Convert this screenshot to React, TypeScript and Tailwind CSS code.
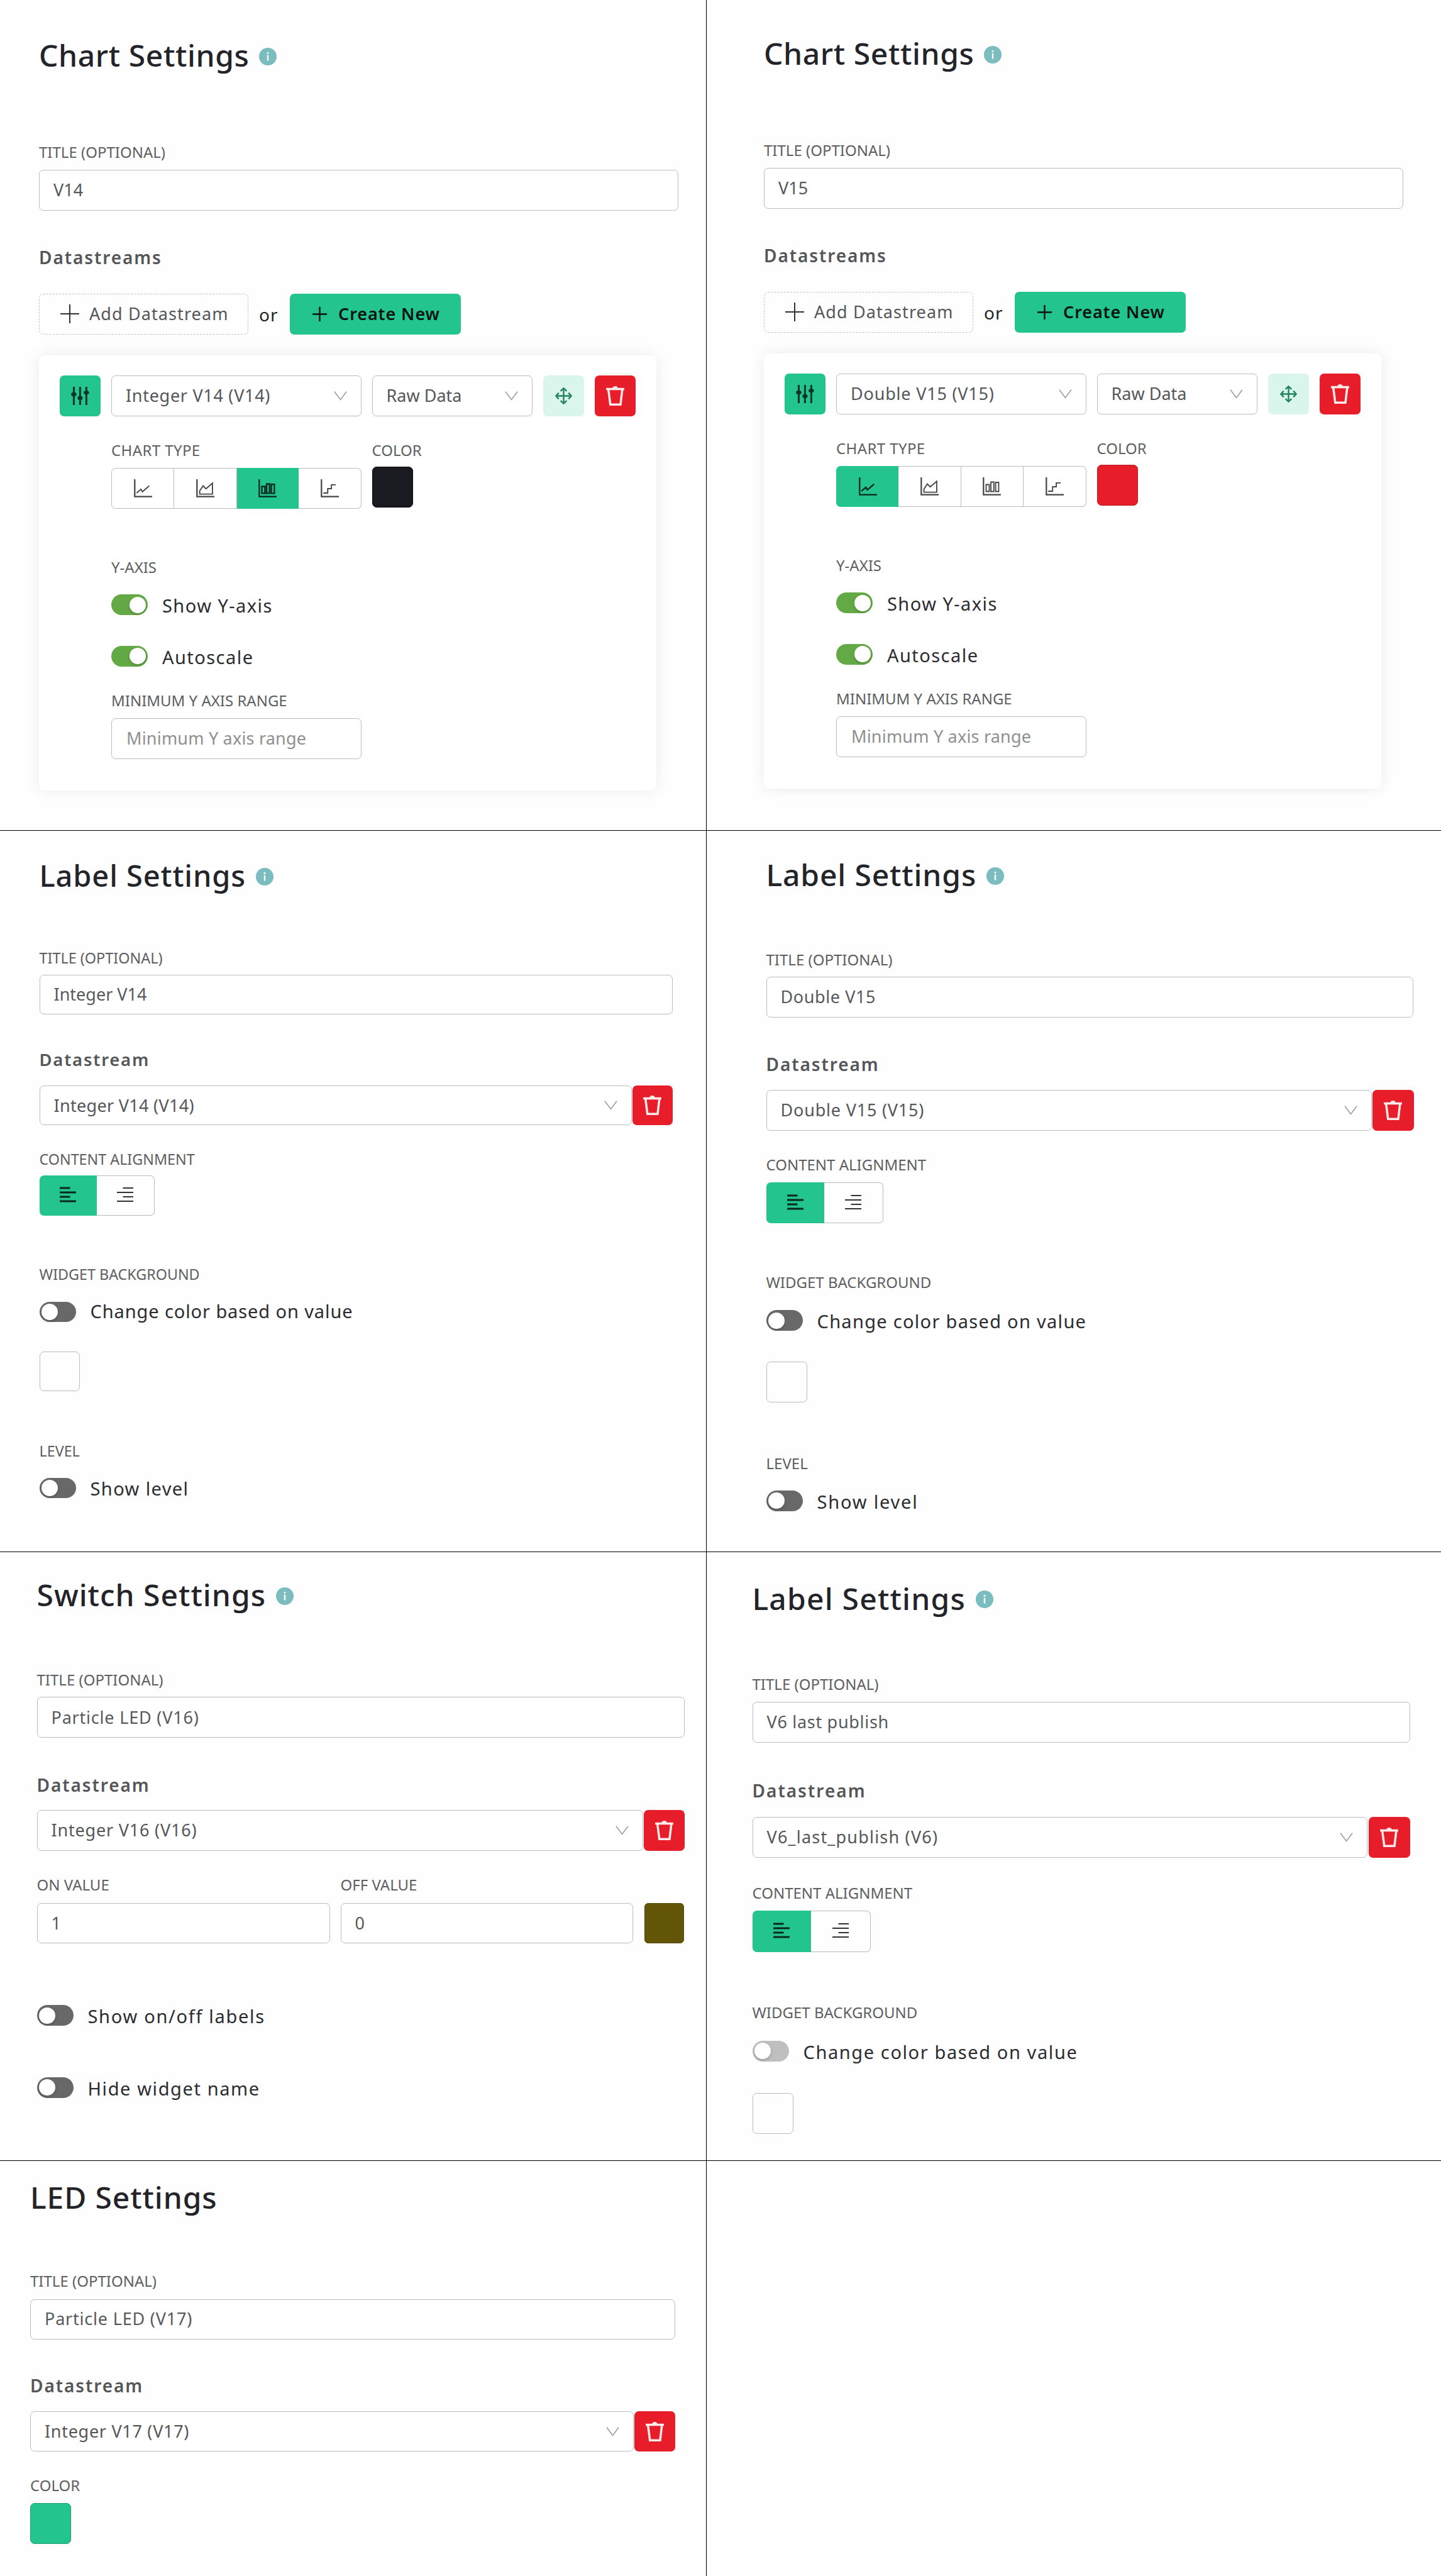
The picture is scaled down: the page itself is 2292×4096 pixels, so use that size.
import type { ReactNode } from "react";

const SANS = "font-['Noto_Sans',sans-serif]";

/* ---------- icons ---------- */

function InfoIcon() {
  return (
    <svg viewBox="0 0 28 28" className="mt-[3px] size-[28px] shrink-0">
      <circle cx="14" cy="14" r="14" fill="#7bbcbe" />
      <circle cx="14" cy="8.2" r="1.5" fill="#fff" />
      <rect x="12.8" y="11.4" width="2.4" height="9.2" rx="0.6" fill="#fff" />
    </svg>
  );
}

function Chevron() {
  return (
    <svg viewBox="0 0 21 15" className="h-[15px] w-[21px] shrink-0" fill="none" stroke="#9c9c9c" strokeWidth="1.6">
      <path d="M1 0.8 L10.5 13.4 L20 0.8" />
    </svg>
  );
}

function TrashIcon() {
  return (
    <svg viewBox="0 0 31 33.3" className="h-[31px] w-[29px] shrink-0" fill="none">
      <path d="M11 3.2 Q11.6 0 15.5 0 Q19.4 0 20 3.2 Z" fill="#fde8ea" />
      <path d="M0 3 H31 V6.8 H0 Z" fill="#fde8ea" />
      <path d="M3.9 6 L7.2 31.4 H24.6 L27.6 6" stroke="#fde8ea" strokeWidth="3.8" />
    </svg>
  );
}

function SlidersIcon() {
  return (
    <svg viewBox="0 0 31 31.4" className="h-[29px] w-[29px]" stroke="#0c3527" strokeWidth="3.2">
      <path d="M4.6 0 V31.4 M15.4 0 V31.4 M26.2 0 V31.4" />
      <g fill="#0c3527" stroke="none">
        <ellipse cx="4.6" cy="13" rx="4.6" ry="3.6" />
        <ellipse cx="15.4" cy="19.4" rx="4.4" ry="3.4" />
        <ellipse cx="26.2" cy="10" rx="4.6" ry="3.2" />
      </g>
    </svg>
  );
}

function MoveIcon() {
  return (
    <svg viewBox="0 0 28 28" className="size-[27px]" fill="none" stroke="#22835f" strokeWidth="2.5">
      <path d="M14 1 V27 M1 14 H27" />
      <path d="M9 6 L14 1.4 L19 6 M9 22 L14 26.6 L19 22 M6 9 L1.4 14 L6 19 M22 9 L26.6 14 L22 19" />
    </svg>
  );
}

function Plus({ className }: { className: string }) {
  return (
    <svg viewBox="0 0 30 30" className={className} fill="none" stroke="currentColor">
      <path d="M15 0 V30 M0 15 H30" />
    </svg>
  );
}

const CHARTS = [
  "M4.5 23.5 L12 17 L14.4 21.4 L26 11.3",
  "M6 25.3 V19.7 L11.7 11.3 L16.7 16.3 L27.7 6.7 V25.3 Z",
  "M5.9 12.3 H11.2 V24 H5.9 Z M14 8 H19 V24 H14 Z M22 8.6 H27.2 V24 H22 Z",
  "M4.5 23.5 H12 V16 H18.3 V9.5 H25.7",
];

function ChartIcon({ kind, on }: { kind: number; on: boolean }) {
  return (
    <svg viewBox="0 0 31 31" className="size-[29px]" fill="none" stroke={on ? "#06291d" : "#454545"}>
      <path d="M1.4 0 V29.6 H31" strokeWidth="2.4" />
      <path d={CHARTS[kind]} strokeWidth={on ? 2.5 : 2} />
    </svg>
  );
}

function AlignIcon({ right = false, on = false }: { right?: boolean; on?: boolean }) {
  return (
    <svg viewBox="0 0 26 25" className="mb-[2px] h-[25px] w-[26px]" stroke={on ? "#06291d" : "#333333"} strokeWidth={on ? 2.9 : 2.1}>
      <path d={right ? "M9.5 2 H26 M0 9 H26 M9.5 16 H26 M0 23 H26" : "M0 2 H16.5 M0 9 H26 M0 16 H16.5 M0 23 H26"} />
    </svg>
  );
}

/* ---------- form pieces ---------- */

function Title({ children, info = true, className = "", text = "text-[48px] tracking-[0.6px]" }: {
  children: string;
  info?: boolean;
  className?: string;
  text?: string;
}) {
  return (
    <div className={`flex h-[60px] items-center gap-[16px] ${className}`}>
      <h1 className={`leading-[60px] font-medium whitespace-nowrap text-[#232429] ${text}`}>{children}</h1>
      {info && <InfoIcon />}
    </div>
  );
}

function Label({ children, className = "", text = "text-[24px]" }: { children: string; className?: string; text?: string }) {
  return <div className={`h-[32px] leading-[32px] whitespace-nowrap text-[#5e5f62] ${text} ${className}`}>{children}</div>;
}

function Heading({ children, className = "", text = "text-[28px] tracking-[1.9px]" }: { children: string; className?: string; text?: string }) {
  return <h2 className={`h-[32px] leading-[32px] font-[560] whitespace-nowrap text-[#555659] ${text} ${className}`}>{children}</h2>;
}

function Field({ children, className = "" }: { children: string; className?: string }) {
  return (
    <div className={`flex items-center rounded-[7px] border border-[#bcbcbc] bg-white px-[22px] text-[27px] font-[385] whitespace-nowrap text-[#58595c] ${className}`}>
      {children}
    </div>
  );
}

function Select({ children, className = "" }: { children: string; className?: string }) {
  return (
    <div className={`flex items-center justify-between rounded-[7px] border border-[#bcbcbc] bg-white px-[22px] text-[27px] font-[385] whitespace-nowrap text-[#55565a] ${className}`}>
      <span>{children}</span>
      <Chevron />
    </div>
  );
}

function TrashButton({ className = "" }: { className?: string }) {
  return (
    <button className={`flex items-center justify-center rounded-[7px] bg-[#e71d29] ${className}`}>
      <TrashIcon />
    </button>
  );
}

function Toggle({ children, on = false, muted = false, className = "h-[33px]", text = "tracking-[1.45px] pt-[2px]" }: {
  children: string;
  on?: boolean;
  muted?: boolean;
  className?: string;
  text?: string;
}) {
  return (
    <div className={`flex items-center gap-[23px] ${className}`}>
      <span
        className={`flex h-full w-[58px] shrink-0 items-center rounded-full px-[3px] ${
          on ? "justify-end bg-[#63a945]" : muted ? "bg-[#bfbfbf]" : "bg-[#686868]"
        }`}
      >
        <span className="size-[26px] rounded-full bg-white shadow-[0_2px_4px_rgba(0,0,0,0.2)]" />
      </span>
      <span className={`text-[29px] leading-[33px] font-[395] whitespace-nowrap text-[#2b2c30] ${text}`}>{children}</span>
    </div>
  );
}

function AlignGroup({ className = "" }: { className?: string }) {
  return (
    <div className={`flex ${className}`}>
      <span className="flex flex-1 items-center justify-center rounded-l-[7px] bg-[#23c48e]">
        <AlignIcon on />
      </span>
      <span className="flex flex-1 items-center justify-center rounded-r-[7px] border border-l-0 border-[#bcbcbc]">
        <AlignIcon right />
      </span>
    </div>
  );
}

function Cell({ children, className = "" }: { children?: ReactNode; className?: string }) {
  return <section className={`flex flex-col items-start ${className}`}>{children}</section>;
}

function ChartSettings({ title, stream, active, swatch, tracking }: {
  title: string;
  stream: string;
  active: number;
  swatch: string;
  tracking: string;
}) {
  return (
    <>
      <Label className="mt-[107.5px]">TITLE (OPTIONAL)</Label>
      <Field className="mt-[12.5px] h-[65px] w-[1017px]">{title}</Field>
      <Heading className="mt-[58px]">Datastreams</Heading>
      <div className="mt-[41.5px] flex h-[65px] items-center">
        <button className="flex h-full w-[333px] items-center rounded-[7px] border border-dashed border-[#c4c4c4] pl-[33px] text-[27px] font-[395] tracking-[1.1px] whitespace-nowrap text-[#55565a]">
          <Plus className="mr-[16px] size-[30px] stroke-2 text-[#333]" />
          Add Datastream
        </button>
        <span className="w-[66px] pt-[2px] pl-[17px] text-[28px] font-[395] tracking-[1px] text-[#222326]">or</span>
        <button className="flex h-full w-[272px] items-center rounded-[7px] bg-[#23c48e] pl-[36px] text-[27px] font-semibold tracking-[0.9px] whitespace-nowrap text-[#08140f]">
          <Plus className="mr-[18px] size-[23px] stroke-[3.2]" />
          Create New
        </button>
      </div>
      <div className="mt-[33px] flex h-[692px] w-[982px] flex-col items-start rounded-[9px] bg-white pt-[32px] pl-[33px] shadow-[0_0_24px_rgba(0,0,0,0.08)]">
        <div className="flex h-[65px] items-stretch">
          <button className="mr-[17px] flex w-[65px] items-center justify-center rounded-[7px] bg-[#23c48e]">
            <SlidersIcon />
          </button>
          <Select className={`mr-[17px] w-[397.5px] ${tracking}`}>{stream}</Select>
          <Select className="mr-[17px] w-[255px]">Raw Data</Select>
          <button className="mr-[17px] flex w-[65px] items-center justify-center rounded-[7px] bg-[#daf5eb]">
            <MoveIcon />
          </button>
          <TrashButton className="w-[65px]" />
        </div>
        <div className="ml-[82px] flex flex-col items-start">
          <div className="mt-[38px] flex gap-[17px]">
            <div>
              <Label className="tracking-[0.4px]">CHART TYPE</Label>
              <div className="mt-[12px] flex h-[65px] w-[397.5px]">
                {CHARTS.map((_, i) => (
                  <span
                    key={i}
                    className={`flex flex-1 items-center justify-center first:rounded-l-[7px] first:border-l last:rounded-r-[7px] ${
                      i === active ? "border-[#23c48e] bg-[#23c48e]" : "border-y border-r border-[#bcbcbc]"
                    }`}
                  >
                    <ChartIcon kind={i} on={i === active} />
                  </span>
                ))}
              </div>
            </div>
            <div>
              <Label>COLOR</Label>
              <div className={`mt-[10px] size-[65px] rounded-[7px] border ${swatch}`} />
            </div>
          </div>
          <Label className="mt-[77px]">Y-AXIS</Label>
          <Toggle on className="mt-[27.5px] h-[33px]">Show Y-axis</Toggle>
          <Toggle on className="mt-[48.5px] h-[33px]">Autoscale</Toggle>
          <Label className="mt-[38px]">MINIMUM Y AXIS RANGE</Label>
          <div className="mt-[12px] flex h-[65px] w-[397.5px] items-center rounded-[7px] border border-[#bcbcbc] pl-[23px] text-[27px] font-[385] tracking-[0.2px] whitespace-nowrap text-[#8f8f8f]">
            Minimum Y axis range
          </div>
        </div>
      </div>
    </>
  );
}

export default function App() {
  return (
    <main className={`grid h-[4096px] w-[2292px] grid-cols-[1124px_1168px] grid-rows-[1321px_1147px_968px_660px] overflow-hidden bg-[#fefefe] ${SANS}`}>
      <Cell className="border-r border-b border-black pl-[62px]">
        <Title className="mt-[58px]">Chart Settings</Title>
        <ChartSettings title="V14" stream="Integer V14 (V14)" active={2} tracking="tracking-[0.7px]" swatch="border-[#0c0d10] bg-[#1a1b20]" />
      </Cell>

      <Cell className="border-b border-black pl-[91px]">
        <Title className="mt-[55px]">Chart Settings</Title>
        <ChartSettings title="V15" stream="Double V15 (V15)" active={0} tracking="tracking-[0.8px]" swatch="border-[#b81c25] bg-[#e71d29]" />
      </Cell>

      <Cell className="border-r border-b border-black pl-[62.5px]">
        <Title className="mt-[41px]" text="text-[47px] tracking-[0.9px]">Label Settings</Title>
        <Label className="mt-[84.8px]" text="text-[23.4px]">TITLE (OPTIONAL)</Label>
        <Field className="mt-[10.8px] h-[63px] w-[1007px]">Integer V14</Field>
        <Heading className="mt-[56.8px]" text="text-[27.4px] tracking-[1.8px]">Datastream</Heading>
        <div className="mt-[25.1px] flex h-[63px]">
          <Select className="w-[942px] tracking-[0.3px]">Integer V14 (V14)</Select>
          <TrashButton className="ml-px w-[64px]" />
        </div>
        <Label className="mt-[37.4px]" text="text-[23.3px]">CONTENT ALIGNMENT</Label>
        <AlignGroup className="mt-[10.2px] h-[63.5px] w-[183px]" />
        <Label className="mt-[77.2px]" text="text-[23.3px]">WIDGET BACKGROUND</Label>
        <Toggle className="mt-[27.9px] h-[32px]" text="tracking-[0.9px] mb-[3px]">Change color based on value</Toggle>
        <div className="mt-[47px] h-[63px] w-[64px] rounded-[7px] border border-[#bcbcbc]" />
        <Label className="mt-[79.5px]" text="text-[23.3px]">LEVEL</Label>
        <Toggle className="mt-[26.9px] h-[32px]" text="tracking-[1.4px]">Show level</Toggle>
      </Cell>

      <Cell className="border-b border-black pl-[94.5px]">
        <Title className="mt-[40.2px]" text="text-[48px] tracking-[0.85px]">Label Settings</Title>
        <Label className="mt-[88.4px]">TITLE (OPTIONAL)</Label>
        <Field className="mt-[11.5px] h-[65px] w-[1029px] tracking-[0.6px]">Double V15</Field>
        <Heading className="mt-[58.2px]">Datastream</Heading>
        <div className="mt-[24.3px] flex h-[65.3px]">
          <Select className="w-[963px] tracking-[0.8px]">Double V15 (V15)</Select>
          <TrashButton className="ml-px w-[66px]" />
        </div>
        <Label className="mt-[38.5px]">CONTENT ALIGNMENT</Label>
        <AlignGroup className="mt-[11.5px] h-[65.3px] w-[186px]" />
        <Label className="mt-[78.1px]">WIDGET BACKGROUND</Label>
        <Toggle className="mt-[27.8px] h-[33px]" text="tracking-[1.3px] pt-[2px]">Change color based on value</Toggle>
        <div className="mt-[49px] size-[65px] rounded-[7px] border border-[#bcbcbc]" />
        <Label className="mt-[80.8px]">LEVEL</Label>
        <Toggle className="mt-[26.7px] h-[33px]" text="tracking-[1.8px] pt-[2px]">Show level</Toggle>
      </Cell>

      <Cell className="border-r border-b border-black pl-[58.5px]">
        <Title className="mt-[38.4px]" text="text-[48px] tracking-[1px]">Switch Settings</Title>
        <Label className="mt-[88.5px]">TITLE (OPTIONAL)</Label>
        <Field className="mt-[11.5px] h-[65px] w-[1030px] tracking-[0.8px]">Particle LED (V16)</Field>
        <Heading className="mt-[58.2px]">Datastream</Heading>
        <div className="mt-[24.4px] flex h-[65px]">
          <Select className="w-[964px] tracking-[0.8px]">Integer V16 (V16)</Select>
          <TrashButton className="ml-px w-[65px]" />
        </div>
        <div className="mt-[38.2px] flex">
          <Label className="w-[483px]">ON VALUE</Label>
          <Label>OFF VALUE</Label>
        </div>
        <div className="mt-[12.8px] flex h-[64px]">
          <Field className="w-[466px]">1</Field>
          <Field className="ml-[17px] w-[465px]">0</Field>
          <div className="ml-[18px] w-[63px] rounded-[6px] border border-[#54490a] bg-[#635507]" />
        </div>
        <Toggle className="mt-[98.1px] h-[33px]" text="tracking-[1.7px] pt-[2px]">Show on/off labels</Toggle>
        <Toggle className="mt-[81.7px] h-[33px]" text="tracking-[1.6px] pt-[2px]">Hide widget name</Toggle>
      </Cell>

      <Cell className="border-b border-black pl-[72.5px]">
        <Title className="mt-[43.5px]" text="text-[48px] tracking-[1.2px]">Label Settings</Title>
        <Label className="mt-[90.4px]">TITLE (OPTIONAL)</Label>
        <Field className="mt-[12.1px] h-[65.5px] w-[1046px] tracking-[0.7px]">V6 last publish</Field>
        <Heading className="mt-[60px]" text="text-[28px] tracking-[2px]">Datastream</Heading>
        <div className="mt-[25.2px] flex h-[65.5px]">
          <Select className="w-[978px] tracking-[1.2px]">V6_last_publish (V6)</Select>
          <TrashButton className="ml-[2px] w-[66px]" />
        </div>
        <Label className="mt-[40.3px]">CONTENT ALIGNMENT</Label>
        <AlignGroup className="mt-[11.5px] h-[66px] w-[188px]" />
        <Label className="mt-[80.2px]">WIDGET BACKGROUND</Label>
        <Toggle muted className="mt-[28.5px] h-[33.5px]" text="tracking-[1.6px] pt-[2px]">Change color based on value</Toggle>
        <div className="mt-[49.9px] size-[65px] rounded-[7px] border border-[#bcbcbc]" />
      </Cell>

      <Cell className="border-r border-black pl-[48px]">
        <Title info={false} className="mt-[28px]" text="text-[48px] tracking-[0.9px]">LED Settings</Title>
        <Label className="mt-[87px]">TITLE (OPTIONAL)</Label>
        <Field className="mt-[12.5px] h-[64px] w-[1026px] tracking-[0.8px]">Particle LED (V17)</Field>
        <Heading className="mt-[57.8px]">Datastream</Heading>
        <div className="mt-[24.9px] flex h-[64px]">
          <Select className="w-[960px] tracking-[0.7px]">Integer V17 (V17)</Select>
          <TrashButton className="ml-px w-[65px]" />
        </div>
        <Label className="mt-[38.3px]">COLOR</Label>
        <div className="mt-[11.5px] size-[65px] rounded-[7px] border border-[#1e9f75] bg-[#23c48e]" />
      </Cell>

      <Cell />
    </main>
  );
}
